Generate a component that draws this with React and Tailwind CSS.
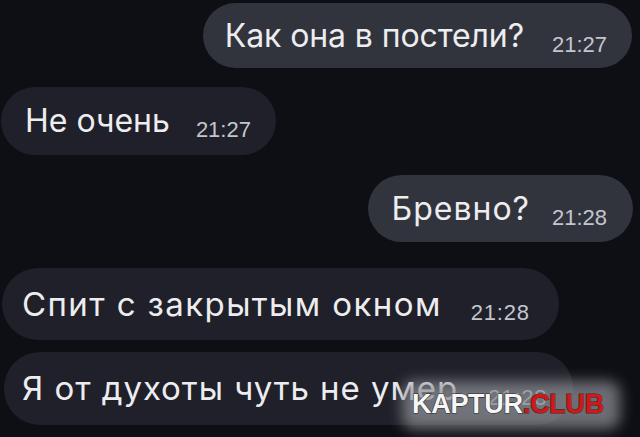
export default function App() {
  const font = { fontFamily: '"Liberation Sans", Arial, sans-serif' };
  const msg = "leading-none text-[#ededf0] [font-family:Inter,'Liberation_Sans',sans-serif]";
  const time = "mt-[18px] text-[22px] leading-none text-[#c3c6ce]";
  return (
    <div
      className="relative w-[640px] h-[437px] overflow-hidden bg-[#0e0e15] flex flex-col"
      style={font}
    >
      {/* 1 outgoing */}
      <div className="self-end mr-[8px] mt-[3px] h-[65px] rounded-[34px] bg-[#31343d] pl-[22px] pr-[25px] flex items-center">
        <span className={msg + " text-[32px] tracking-[-0.1px]"}>Как она в постели?</span>
        <span className={"ml-[28px] " + time}>21:27</span>
      </div>
      {/* 2 incoming */}
      <div className="self-start ml-[1px] mt-[19px] h-[68px] rounded-[34px] bg-[#1f2029] pl-[24px] pr-[25px] flex items-center">
        <span className={msg + " text-[32px] tracking-[0px]"}>Не очень</span>
        <span className={"ml-[26px] " + time}>21:27</span>
      </div>
      {/* 3 outgoing */}
      <div className="self-end mr-[7px] mt-[20px] h-[67px] rounded-[34px] bg-[#31343d] pl-[23px] pr-[26px] flex items-center">
        <span className={msg + " text-[32px] tracking-[1px]"}>Бревно?</span>
        <span className={"ml-[22px] " + time}>21:28</span>
      </div>
      {/* 4 incoming */}
      <div className="self-start ml-[2px] mt-[26px] h-[72px] rounded-[36px] bg-[#1f2029] pl-[20px] pr-[29px] flex items-center">
        <span className={msg + " text-[33px] tracking-[1.4px]"}>Спит с закрытым окном</span>
        <span className={"ml-[29px] tracking-[0.8px] " + time}>21:28</span>
      </div>
      {/* 5 incoming */}
      <div className="self-start ml-[4px] mt-[12px] h-[73px] rounded-[36px] bg-[#1f2029] pl-[18px] pr-[26px] flex items-center">
        <span className={msg + " text-[33px] tracking-[0.95px]"}>Я от духоты чуть не умер</span>
        <span className={"ml-[30px] tracking-[0.8px] " + time}>21:28</span>
      </div>

      {/* watermark */}
      <div className="absolute left-[402px] top-[381px] w-[218px] h-[48px] rounded-[12px] bg-[#8d8f95]/75 blur-[7px]" />
      <div
        className="absolute left-[412px] top-[391px] text-[27px] font-bold leading-none tracking-[-0.3px] [-webkit-text-stroke:1.2px_#2e2e2e] [paint-order:stroke_fill]"
        style={{ fontFamily: '"Liberation Sans", Arial, sans-serif' }}
      >
        <span className="text-[#f6f6f6]">KAPTUR</span>
        <span className="text-[#d41616]">.CLUB</span>
      </div>
    </div>
  );
}
